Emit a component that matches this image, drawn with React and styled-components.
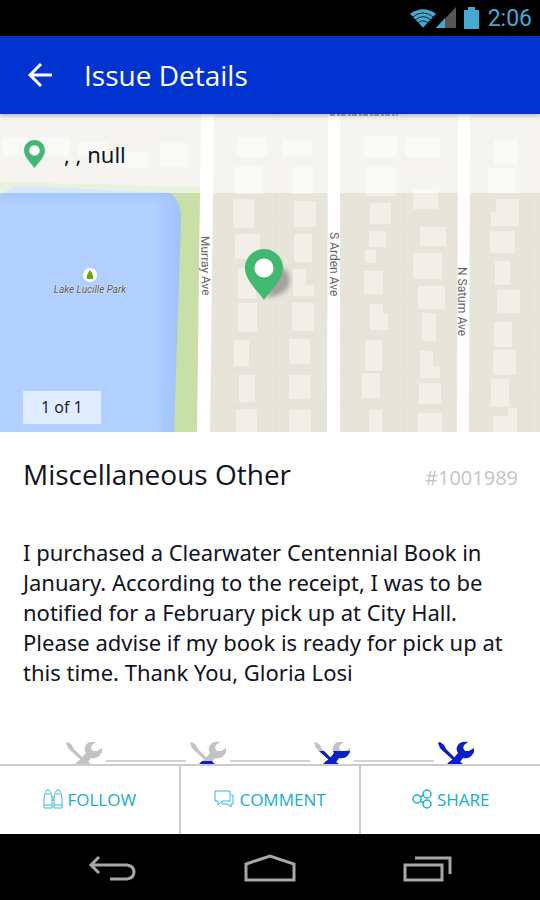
import styled, { createGlobalStyle } from "styled-components";

const buildings = [
  [3, 138, 66, 18], [78, 142, 30, 14], [112, 152, 36, 16], [160, 143, 28, 24],
  [237, 138, 30, 19], [282, 140, 30, 16], [235, 166, 28, 28], [293, 167, 20, 27],
  [233, 199, 21, 29], [294, 201, 22, 26], [235, 234, 25, 25], [294, 234, 18, 28],
  [238, 268, 18, 31], [293, 269, 13, 27], [306, 285, 8, 11], [238, 303, 19, 29],
  [292, 303, 22, 28], [234, 340, 15, 26], [289, 339, 21, 25], [239, 375, 16, 27],
  [289, 375, 21, 24], [236, 409, 21, 23], [289, 410, 22, 22], [364, 136, 33, 21],
  [405, 138, 35, 19], [366, 167, 30, 29], [413, 189, 25, 20], [370, 203, 21, 21],
  [369, 231, 17, 16], [365, 250, 11, 13], [364, 271, 19, 23], [370, 304, 13, 9],
  [370, 313, 18, 17], [365, 340, 17, 31], [362, 373, 18, 25], [369, 410, 13, 22],
  [420, 227, 26, 19], [413, 253, 29, 26], [418, 286, 27, 23], [422, 313, 14, 28],
  [420, 351, 13, 15], [420, 366, 20, 12], [419, 383, 22, 21], [418, 413, 24, 19],
  [494, 140, 24, 24], [488, 168, 27, 25], [496, 199, 23, 27], [491, 212, 5, 14],
  [490, 231, 25, 22], [495, 261, 15, 24], [497, 290, 23, 23], [494, 322, 18, 25],
  [493, 350, 23, 25], [491, 379, 18, 28], [493, 416, 24, 16], [508, 408, 9, 8],
];

const steps = [
  { id: "submitted", filled: 0 },
  { id: "received", filled: 16 },
  { id: "progress", filled: 26 },
  { id: "closed", filled: 36 },
];

function StatusBar() {
  return (
    <StStatusBar>
      <svg width="26" height="21" viewBox="0 0 28 22" fill="none">
        <path d="M0 6Q14 -4 28 6L14 21Z" fill="#45a9d2" />
        <path
          d="M2 10Q14 0 26 10M5 13Q14 5 23 13M8 16Q14 11 20 16"
          stroke="#0a1c24"
          strokeWidth="1"
        />
      </svg>
      <svg width="20" height="22" viewBox="0 0 20 22">
        <path d="M0 21L20 0V21Z" fill="#555" />
        <path d="M0 21L9 11V21Z" fill="#45a9d2" />
      </svg>
      <StBattery width="15" height="22" viewBox="0 0 15 22">
        <path d="M4 0H11V3H15V22H0V3H4Z" fill="#45a9d2" />
      </StBattery>
      <StClock>2:06</StClock>
    </StStatusBar>
  );
}

function PinIcon({ width, height }) {
  return (
    <svg width={width} height={height} viewBox="0 0 38 51">
      <path
        d="M19 0C8.500 0 0 8.500 0 19C0 31 12 41 19 51C26 41 38 31 38 19C38 8.500 29.500 0 19 0Z"
        fill="#43b871"
      />
      <circle cx="19" cy="19" r="9.500" fill="#fff" />
    </svg>
  );
}

function MapDrawing() {
  return (
    <StMapDrawing viewBox="0 114 540 318" preserveAspectRatio="xMidYMid slice">
      <defs>
        <linearGradient id="lakeEdge" x1="0" x2="1">
          <stop offset="0.85" stopColor="#b1cfff" />
          <stop offset="1" stopColor="#9ec2fb" />
        </linearGradient>
        <linearGradient id="lakeTop" x1="0" x2="0" y1="0" y2="1">
          <stop offset="0" stopColor="#98bdfa" />
          <stop offset="0.1" stopColor="#b1cfff" stopOpacity="0" />
        </linearGradient>
        <filter id="soft" x="-50%" y="-50%" width="200%" height="200%">
          <feGaussianBlur stdDeviation="2" />
        </filter>
      </defs>
      <rect y="114" width="540" height="318" fill="#e7e4d9" />
      <path
        d="M276 114V432M404 114V432M529 114V432M212 222H328M212 265H328M212 300H328M212 335H328M212 370H328M212 405H328M340 230H457M340 266H457M340 301H457M340 336H457M340 372H457M340 407H457M469 240H540M469 285H540M469 320H540M469 358H540M469 396H540"
        stroke="#e4e1d5"
        fill="none"
      />
      <path d="M0 182L201 187L197 432H0Z" fill="#c8dfa8" />
      <path
        d="M0 195Q8 188 22 186L170 193Q181 201 181 220L174 432H0Z"
        fill="url(#lakeEdge)"
      />
      <path
        d="M0 195Q8 188 22 186L170 193Q181 201 181 220L174 432H0Z"
        fill="url(#lakeTop)"
      />
      {buildings.map(([x, y, width, height]) => (
        <rect
          key={`${x}-${y}`}
          x={x}
          y={y}
          width={width}
          height={height}
          fill="#f1efe8"
        />
      ))}
      <path
        d="M201 114H214L210 432H197ZM328 114H340V432H327ZM458 114H470L469 432H457Z"
        fill="#fff"
      />
      <path d="M330 115H398" stroke="#333" strokeWidth="2" strokeDasharray="5 2 3 1" />
      <g fontFamily="Roboto, sans-serif" fontSize="12" fill="#666">
        <text transform="translate(201 236) rotate(89)">Murray Ave</text>
        <text transform="translate(330 232) rotate(90)">S Arden Ave</text>
        <text transform="translate(458 267) rotate(90)">N Saturn Ave</text>
      </g>
      <circle cx="90" cy="275" r="7" fill="#fff" />
      <path d="M90 270Q94 275 93 279H87Q86 275 90 270Z" fill="#66a80f" />
      <text
        x="90"
        y="293"
        textAnchor="middle"
        fontFamily="Roboto, sans-serif"
        fontSize="10"
        fontStyle="italic"
        fill="#555"
        stroke="#dfe9fb"
        strokeWidth="1"
        paintOrder="stroke"
      >
        Lake Lucille Park
      </text>
      <path
        d="M266 298Q294 294 289 275Q286 268 278 266Z"
        fill="#777"
        opacity="0.6"
        filter="url(#soft)"
      />
      <g transform="translate(245 249)">
        <PinIcon width="38" height="51" />
      </g>
    </StMapDrawing>
  );
}

function ToolsShape() {
  return (
    <>
      <path d="M0 2L2 1L6 4L8 8L18 18L25 23L32 31Q33 35 29 36L20 28L15 19L5 10L2 7Z" />
      <path d="M30 1Q21 0 19 6Q18 9 20 12L15 18L11 21L3 30Q2 35 7 36L17 28L25 17Q31 18 34 14Q37 11 36 7L31 10L27 10L25 7L26 4Z" />
    </>
  );
}

function StepIcon({ id, filled }) {
  return (
    <svg width="36" height="36" viewBox="0 0 36 36">
      <clipPath id={id}>
        <rect y={36 - filled} width="36" height={filled} />
      </clipPath>
      <g fill="#c3c3c3">
        <ToolsShape />
      </g>
      <g fill="#0a1fc4" clipPath={`url(#${id})`}>
        <ToolsShape />
      </g>
    </svg>
  );
}

function App() {
  return (
    <StPage>
      <GlobalStyle />
      <StatusBar />
      <StHeader>
        <StBackButton aria-label="Back">
          <svg width="24" height="24" viewBox="0 0 24 24" fill="none">
            <path d="M24 12H3M13 1L2 12L13 23" stroke="#fff" strokeWidth="3" />
          </svg>
        </StBackButton>
        <StHeaderTitle>Issue Details</StHeaderTitle>
      </StHeader>
      <StContent>
        <StMap>
          <MapDrawing />
          <StAddress>
            <PinIcon width="21" height="28" />
            <span>, , null</span>
          </StAddress>
          <StCounter>1 of 1</StCounter>
        </StMap>
        <StIssue>
          <StIssueHead>
            <StIssueTitle>Miscellaneous Other</StIssueTitle>
            <StIssueNumber>#1001989</StIssueNumber>
          </StIssueHead>
          <StIssueText>
            I purchased a Clearwater Centennial Book in January. According to
            the receipt, I was to be notified for a February pick up at City
            Hall. Please advise if my book is ready for pick up at this time.
            Thank You, Gloria Losi
          </StIssueText>
        </StIssue>
        <StSteps>
          {steps.map((step) => (
            <StStep key={step.id}>
              <StepIcon id={step.id} filled={step.filled} />
            </StStep>
          ))}
        </StSteps>
      </StContent>
      <StActions>
        <StAction>
          <svg width="20" height="20" viewBox="0 0 20 20" fill="none" stroke="#35b9d4">
            <path d="M1 19V9Q2 2 4 1H6Q8 2 9 9V19ZM11 19V9Q12 2 14 1H16Q18 2 19 9V19ZM3 5H7M13 5H17M1 16H9M11 16H19M9 8H11M9 11H11" />
          </svg>
          FOLLOW
        </StAction>
        <StAction>
          <svg width="20" height="20" viewBox="0 0 20 20" fill="none" stroke="#35b9d4">
            <path d="M1 2H16V12H8L4 16V12H1ZM17 6H19V15H17V18L13 15H8V13" />
          </svg>
          COMMENT
        </StAction>
        <StAction>
          <svg width="20" height="20" viewBox="0 0 20 20" fill="none" stroke="#1fb2cf" strokeWidth="1.500">
            <circle cx="5" cy="10" r="4" />
            <circle cx="15" cy="5" r="4" />
            <circle cx="15" cy="15" r="4" />
            <path d="M8 8L12 6M8 12L12 14" />
          </svg>
          SHARE
        </StAction>
      </StActions>
      <StNavBar>
        <StNavButton aria-label="Go back">
          <svg width="48" height="30" viewBox="0 0 48 30" fill="none" stroke="#a8a8a8" strokeWidth="3">
            <path d="M11 3L3 11L11 19M3 11H39Q46 12 46 18T39 25H22" />
          </svg>
        </StNavButton>
        <StNavButton aria-label="Home">
          <svg width="52" height="30" viewBox="0 0 52 30" fill="none" stroke="#a8a8a8" strokeWidth="3">
            <path d="M2 26V10L26 2L50 10V26Z" />
          </svg>
        </StNavButton>
        <StNavButton aria-label="Recent apps">
          <svg width="50" height="30" viewBox="0 0 50 30" fill="none" stroke="#a8a8a8" strokeWidth="3">
            <path d="M2 11H39V26H2ZM12 4H47V20" />
          </svg>
        </StNavButton>
      </StNavBar>
    </StPage>
  );
}

export default App;

const GlobalStyle = createGlobalStyle`
  * {
    box-sizing: border-box;
  }

  body {
    margin: 0;
    font-family: "Open Sans", "Noto Sans", sans-serif;
    color: #10131f;
    background-color: #ffffff;
  }

  button {
    border: 0;
    padding: 0;
    font-family: inherit;
    background: none;
    cursor: pointer;
  }

  svg {
    display: block;
    flex-shrink: 0;
  }
`;

const StPage = styled.div`
  display: flex;
  flex-direction: column;
  height: 100vh;
`;

const StStatusBar = styled.div`
  display: flex;
  justify-content: flex-end;
  align-items: center;
  flex-shrink: 0;

  height: 36px;
  padding-right: 8px;

  background-color: #000000;
`;

const StBattery = styled.svg`
  margin: 0 9px 0 8px;
`;

const StClock = styled.span`
  font-family: Roboto, sans-serif;
  font-size: 23px;

  color: #45a9d2;
`;

const StHeader = styled.header`
  display: flex;
  align-items: center;
  gap: 32px;
  flex-shrink: 0;
  z-index: 1;

  height: 78px;
  padding: 0 28px;

  background-color: #0033cf;
  box-shadow: 0 1px 5px rgb(0 0 0 / 35%);
`;

const StBackButton = styled.button`
  display: flex;
`;

const StHeaderTitle = styled.h1`
  margin: 0;

  font-weight: 400;
  font-size: 28px;

  color: #ffffff;
`;

const StContent = styled.main`
  flex: 1;
  min-height: 0;
  overflow: hidden;
`;

const StMap = styled.section`
  position: relative;

  height: 318px;
`;

const StMapDrawing = styled.svg`
  width: 100%;
  height: 100%;
`;

const StAddress = styled.div`
  position: absolute;
  top: 0;
  left: 0;
  right: 0;
  display: flex;
  align-items: center;
  gap: 19px;

  height: 79px;
  padding-left: 24px;

  font-family: "Noto Sans", sans-serif;
  font-size: 22px;

  background-color: rgb(255 255 255 / 60%);
`;

const StCounter = styled.div`
  position: absolute;
  left: 23px;
  bottom: 8px;

  padding: 0 18px;

  font-size: 16px;
  line-height: 33px;

  background-color: rgb(255 255 255 / 60%);
`;

const StIssue = styled.section`
  padding: 22px 22px 0 23px;
`;

const StIssueHead = styled.div`
  display: flex;
  justify-content: space-between;
  align-items: baseline;
`;

const StIssueTitle = styled.h2`
  margin: 0;

  font-weight: 400;
  font-size: 28px;
  line-height: 40px;
`;

const StIssueNumber = styled.span`
  font-size: 20px;

  color: #c4c4c4;
`;

const StIssueText = styled.p`
  margin: 43px 0 0;

  font-family: "Noto Sans", sans-serif;
  font-size: 22px;
  line-height: 30px;
`;

const StSteps = styled.div`
  display: flex;

  padding: 54px 22px 0;
`;

const StStep = styled.div`
  position: relative;
  flex: 1;
  display: flex;
  justify-content: center;

  &:not(:last-child)::after {
    content: "";
    position: absolute;
    top: 19px;
    left: calc(50% + 22px);
    right: calc(22px - 50%);
    height: 2px;
    background-color: #d2d2d2;
  }
`;

const StActions = styled.div`
  display: flex;
  flex-shrink: 0;

  height: 70px;
  border-top: 2px solid #cccccc;
`;

const StAction = styled.button`
  flex: 1;
  display: flex;
  justify-content: center;
  align-items: center;
  gap: 5px;

  padding-bottom: 2px;

  font-size: 17px;

  color: #14aecb;

  & + & {
    border-left: 2px solid #cccccc;
  }
`;

const StNavBar = styled.nav`
  display: flex;
  justify-content: center;
  align-items: center;
  flex-shrink: 0;

  height: 66px;
  padding-top: 4px;

  background-color: #000000;
`;

const StNavButton = styled.button`
  display: flex;
  justify-content: center;

  width: 158px;
`;
